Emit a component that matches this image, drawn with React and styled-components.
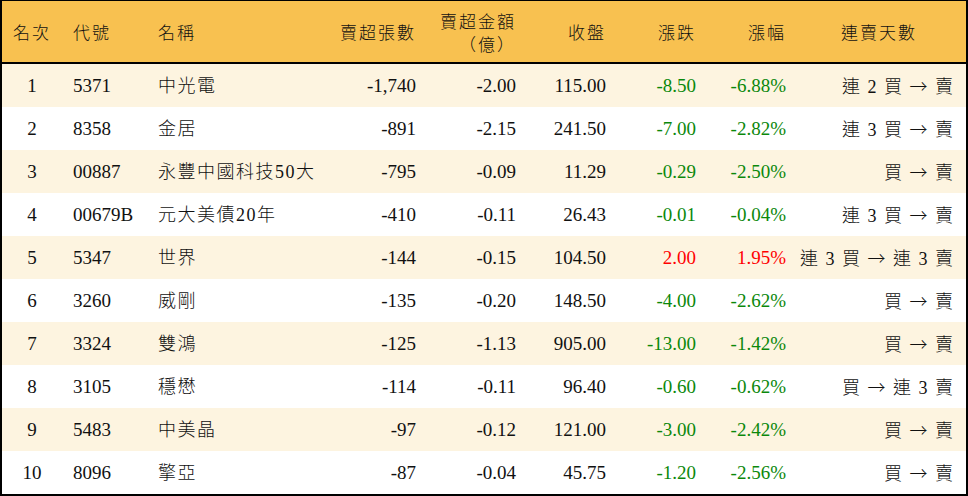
import React from "react";
import styled, { createGlobalStyle } from "styled-components";

const Global = createGlobalStyle`
  html, body { margin: 0; padding: 0; background: #ffffff; }
  body { font-family: "Liberation Serif", "Noto Sans CJK TC", serif; }
`;

const Table = styled.div`
  width: 968px;
  box-sizing: border-box;
  border-left: 2px solid #000;
  border-right: 2px solid #000;
  border-top: 1px solid #000;
  border-bottom: 2px solid #000;
  color: #111;
  font-size: 19px;
`;

const cols = "62px 84px 182px 96px 100px 90px 90px 90px 170px";

const HeaderRow = styled.div`
  display: grid;
  grid-template-columns: ${cols};
  height: 61px;
  background: #f8c150;
  border-bottom: 2px solid #000;
`;

const Row = styled.div`
  display: grid;
  grid-template-columns: ${cols};
  height: 43px;
  background: ${(p) => (p.$alt ? "#fdf4e0" : "#ffffff")};
`;

const Cell = styled.div`
  display: flex;
  align-items: center;
  justify-content: ${(p) =>
    p.$align === "center" ? "center" : p.$align === "left" ? "flex-start" : "flex-end"};
  padding: ${(p) => p.$pad || "0"};
  color: ${(p) => (p.$tone === "down" ? "#0b880b" : p.$tone === "up" ? "#ff0000" : "#111")};
  white-space: nowrap;
  text-align: ${(p) => p.$align || "right"};
  line-height: 22px;
  font-weight: 300;
  box-sizing: border-box;
`;

const HeadText = styled.span`
  font-family: "Noto Sans CJK TC", serif;
  font-size: 17px;
  font-weight: 300;
  letter-spacing: 2px;
  line-height: 23px;
`;

const Name = styled.span`
  font-family: "Liberation Serif", "Noto Sans CJK TC", serif;
  font-size: 18px;
  letter-spacing: 1.5px;
`;

const Streak = styled.span`
  font-family: "Liberation Serif", "Noto Sans CJK TC", serif;
  font-size: 18px;
  word-spacing: 3px;
`;

const Arrow = styled.span`
  font-family: "Noto Sans CJK TC", sans-serif;
  font-size: 18px;
  font-weight: 300;
`;

const colDefs = [
  { align: "center", pad: "0 2px 0 0" },
  { align: "left", pad: "0 0 0 9px" },
  { align: "left", pad: "0 0 0 10px" },
  { align: "right", pad: "0 10px 0 0" },
  { align: "right", pad: "0 10px 0 0" },
  { align: "right", pad: "0 10px 0 0" },
  { align: "right", pad: "0 10px 0 0" },
  { align: "right", pad: "0 10px 0 0" },
  { align: "right", pad: "0 13px 0 0" },
];

const headers = [
  ["名次"],
  ["代號"],
  ["名稱"],
  ["賣超張數"],
  ["賣超金額", "（億）"],
  ["收盤"],
  ["漲跌"],
  ["漲幅"],
  ["連賣天數"],
];

const data = [
  ["1", "5371", "中光電", "-1,740", "-2.00", "115.00", "-8.50", "-6.88%", "連 2 買 → 賣"],
  ["2", "8358", "金居", "-891", "-2.15", "241.50", "-7.00", "-2.82%", "連 3 買 → 賣"],
  ["3", "00887", "永豐中國科技50大", "-795", "-0.09", "11.29", "-0.29", "-2.50%", "買 → 賣"],
  ["4", "00679B", "元大美債20年", "-410", "-0.11", "26.43", "-0.01", "-0.04%", "連 3 買 → 賣"],
  ["5", "5347", "世界", "-144", "-0.15", "104.50", "2.00", "1.95%", "連 3 買 → 連 3 賣"],
  ["6", "3260", "威剛", "-135", "-0.20", "148.50", "-4.00", "-2.62%", "買 → 賣"],
  ["7", "3324", "雙鴻", "-125", "-1.13", "905.00", "-13.00", "-1.42%", "買 → 賣"],
  ["8", "3105", "穩懋", "-114", "-0.11", "96.40", "-0.60", "-0.62%", "買 → 連 3 賣"],
  ["9", "5483", "中美晶", "-97", "-0.12", "121.00", "-3.00", "-2.42%", "買 → 賣"],
  ["10", "8096", "擎亞", "-87", "-0.04", "45.75", "-1.20", "-2.56%", "買 → 賣"],
];

function renderStreak(v) {
  const [a, b] = v.split(" → ");
  return (
    <Streak>
      {a} <Arrow>→</Arrow> {b}
    </Streak>
  );
}

export default function App() {
  return (
    <>
      <Global />
      <Table>
        <HeaderRow>
          {headers.map((h, i) => (
            <Cell
              key={i}
              $align={i === 8 ? "center" : colDefs[i].align}
              $pad={i === 8 ? "0 4px 0 0" : colDefs[i].pad}
            >
              <HeadText>
                {h.map((line, j) => (
                  <React.Fragment key={j}>
                    {j > 0 && <br />}
                    {line}
                  </React.Fragment>
                ))}
              </HeadText>
            </Cell>
          ))}
        </HeaderRow>
        {data.map((r, ri) => {
          const tone = r[6].startsWith("-") ? "down" : "up";
          return (
            <Row key={ri} $alt={ri % 2 === 0}>
              {r.map((v, ci) => (
                <Cell
                  key={ci}
                  $align={colDefs[ci].align}
                  $pad={colDefs[ci].pad}
                  $tone={ci === 6 || ci === 7 ? tone : undefined}
                >
                  {ci === 8 ? renderStreak(v) : ci === 2 ? <Name>{v}</Name> : v}
                </Cell>
              ))}
            </Row>
          );
        })}
      </Table>
    </>
  );
}
